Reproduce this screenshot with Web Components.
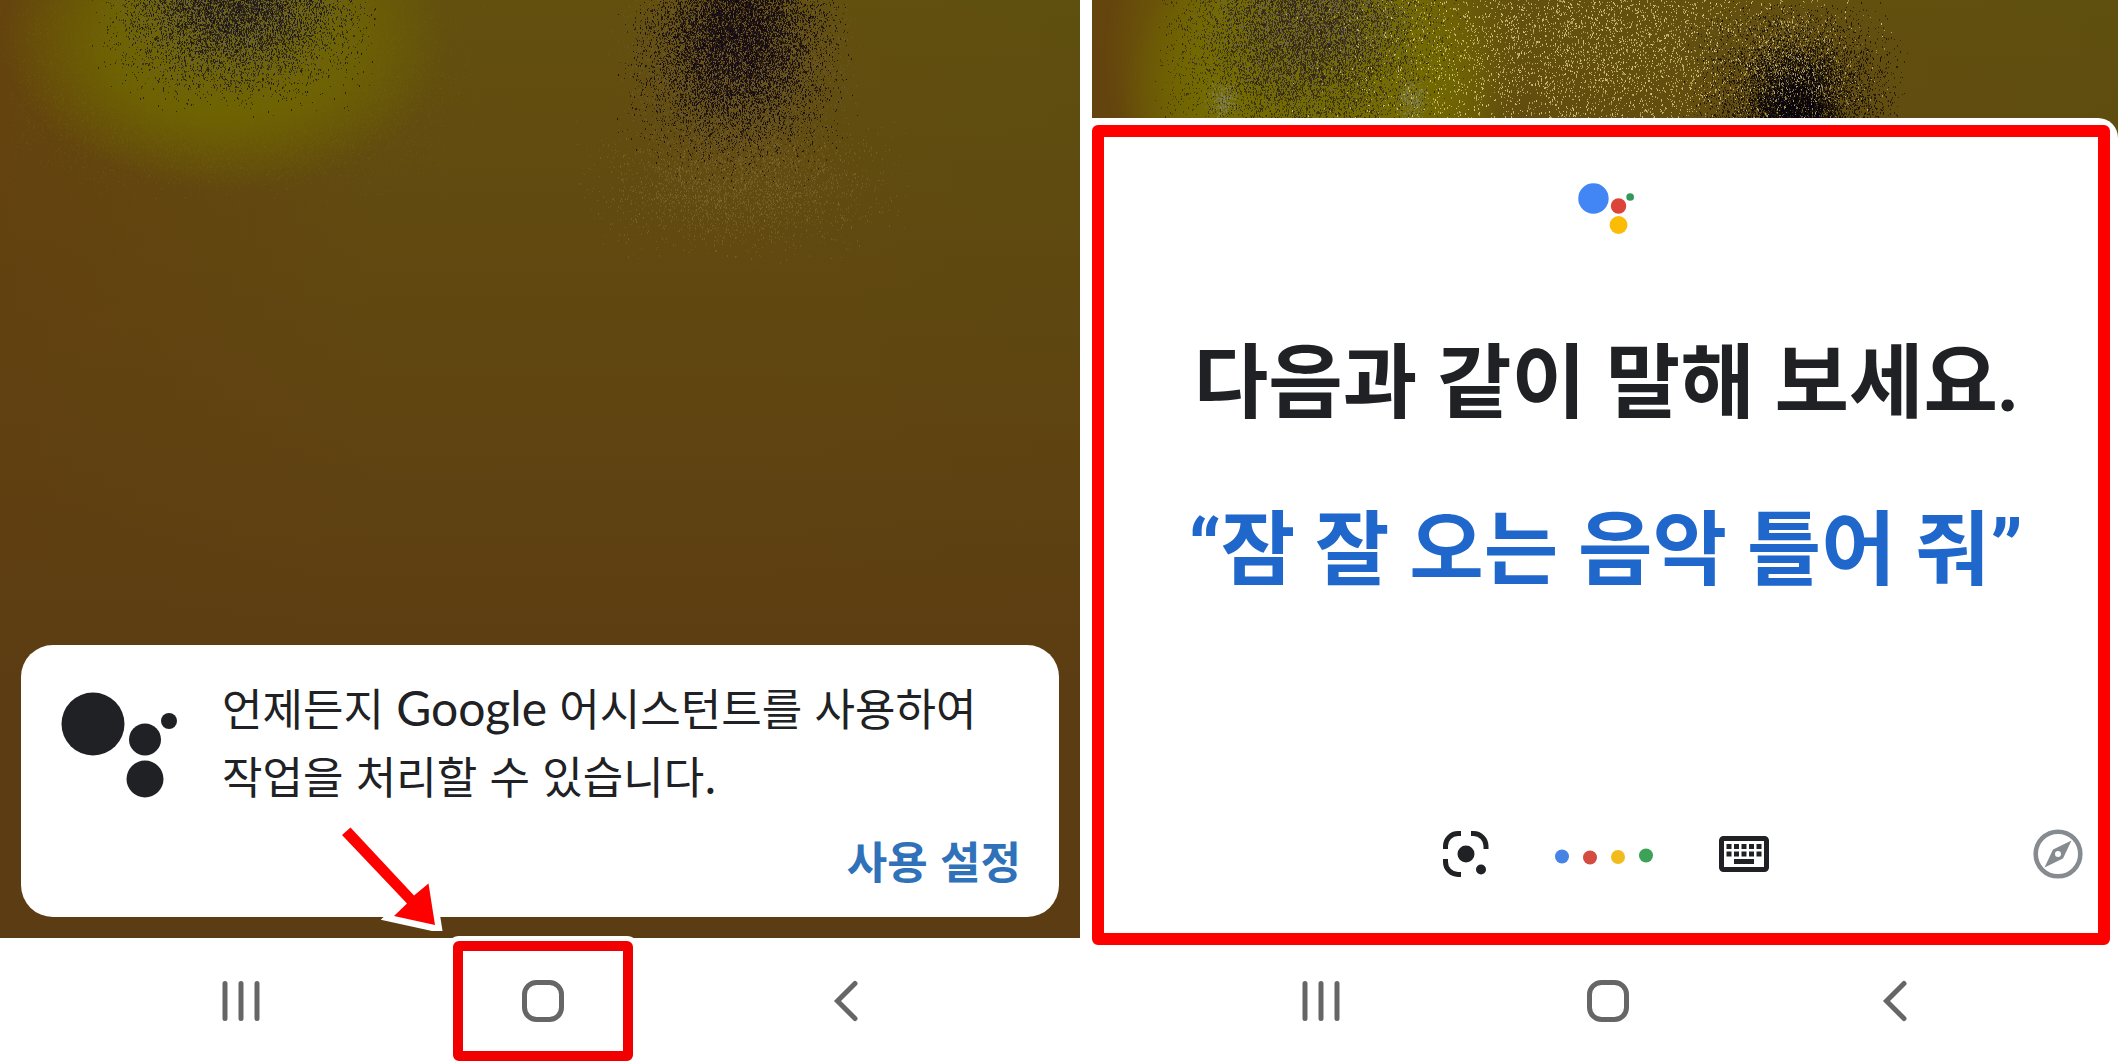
<!DOCTYPE html>
<html lang="ko">
<head>
<meta charset="utf-8">
<title>Google 어시스턴트</title>
<style>
    body {
        margin: 0;
        min-height: 100vh;
        display: grid;
        grid-template-columns: 1080fr 1026fr;
        column-gap: 12px;
        background: #fff;
        color: #202124;
        font-family: "Noto Sans CJK KR", sans-serif;
        overflow-x: hidden;
    }
</style>
</head>
<body>

<phone-screen>
    <speckled-wallpaper slot="wallpaper" scene="home"></speckled-wallpaper>
    <assistant-card>
        언제든지 <span lang="en">Google</span> 어시스턴트를 사용하여<br>작업을 처리할 수 있습니다.
        <span slot="action">사용 설정</span>
    </assistant-card>
    <nav-bar slot="nav" highlight></nav-bar>
</phone-screen>

<phone-screen>
    <speckled-wallpaper slot="wallpaper" scene="assistant"></speckled-wallpaper>
    <assistant-sheet>
        <span slot="title">다음과 같이 말해 보세요.</span>
        <span slot="open-quote">“</span>
        <span slot="hint">잠 잘 오는 음악 틀어 줘</span>
        <span slot="close-quote">”</span>
    </assistant-sheet>
    <nav-bar slot="nav"></nav-bar>
</phone-screen>

<script>
function attach(element, html) {
    const template = document.createElement("template");
    template.innerHTML = html;
    element.attachShadow({ mode: "open" }).appendChild(template.content.cloneNode(true));
}

class PhoneScreen extends HTMLElement {
    constructor() {
        super();
        attach(this, `
            <style>
                :host { display: flex; flex-direction: column; min-width: 0; }
                .screen {
                    flex: 1;
                    position: relative;
                    display: flex;
                    flex-direction: column;
                    justify-content: flex-end;
                }
                ::slotted([slot="wallpaper"]) { position: absolute; inset: 0; }
            </style>
            <div class="screen">
                <slot name="wallpaper"></slot>
                <slot></slot>
            </div>
            <slot name="nav"></slot>
        `);
    }
}

// x, y: centre, rx, ry: spread, n: number of grains
const scenes = {
    home: {
        glows: [
            { x: 225, y: 40, rx: 225, ry: 150, color: "112, 104, 0" }
        ],
        grains: [
            { x: 235, y: 70, rx: 260, ry: 140, n: 30000, color: "112, 98, 6", alpha: .4 },
            { x: 235, y: 0, rx: 160, ry: 120, n: 15000, color: "106, 97, 62", alpha: .75 },
            { x: 235, y: 0, rx: 155, ry: 120, n: 13000, color: "24, 17, 26", alpha: .8 },
            { x: 738, y: 60, rx: 135, ry: 140, n: 12000, color: "110, 94, 62", alpha: .6 },
            { x: 735, y: 58, rx: 125, ry: 135, n: 10000, color: "18, 8, 20", alpha: .9 },
            { x: 738, y: 10, rx: 115, ry: 110, n: 6000, color: "18, 8, 20", alpha: .9 },
            { x: 742, y: 185, rx: 185, ry: 85, n: 3600, color: "140, 116, 58", alpha: .5 }
        ]
    },
    assistant: {
        glows: [
            { x: 220, y: 60, rx: 210, ry: 230, color: "116, 108, 0" },
            { x: 220, y: 100, rx: 190, ry: 170, color: "116, 108, 0" }
        ],
        grains: [
            { x: 220, y: 10, rx: 150, ry: 140, n: 12000, color: "108, 98, 84", alpha: .75 },
            { x: 215, y: 35, rx: 170, ry: 150, n: 14000, color: "44, 32, 22", alpha: .8 },
            { x: 130, y: 100, rx: 22, ry: 28, n: 380, color: "135, 135, 110", alpha: .6 },
            { x: 320, y: 100, rx: 22, ry: 28, n: 380, color: "135, 135, 110", alpha: .6 },
            { x: 500, y: 40, rx: 330, ry: 190, n: 6500, color: "226, 208, 136", alpha: .9 },
            { x: 704, y: 95, rx: 120, ry: 110, n: 9000, color: "16, 10, 14", alpha: .85 },
            { x: 704, y: 122, rx: 55, ry: 85, n: 8000, color: "8, 4, 12", alpha: .9 },
            { x: 704, y: 70, rx: 90, ry: 90, n: 900, color: "205, 185, 130", alpha: .8 }
        ]
    }
};

class SpeckledWallpaper extends HTMLElement {
    constructor() {
        super();
        attach(this, `
            <style>
                :host {
                    display: block;
                    overflow: hidden;
                    background:
                        linear-gradient(180deg, rgba(94, 62, 18, 0) 0, rgba(94, 62, 18, .75) 480px, #5c3d13 680px),
                        linear-gradient(90deg, #65440e 0, #63500f 35%, #63500f 70%, #5f500f 100%);
                }
                canvas { display: block; }
            </style>
            <canvas></canvas>
        `);
    }

    connectedCallback() {
        const canvas = this.shadowRoot.querySelector("canvas");
        const scene = scenes[this.getAttribute("scene")];
        canvas.width = 1080;
        canvas.height = this.getAttribute("scene") === "home" ? 300 : 118;
        const ctx = canvas.getContext("2d");

        scene.glows.forEach((g) => {
            ctx.save();
            ctx.translate(g.x, g.y);
            ctx.scale(g.rx, g.ry);
            const fill = ctx.createRadialGradient(0, 0, 0, 0, 0, 1);
            fill.addColorStop(0, `rgba(${g.color}, 1)`);
            fill.addColorStop(.5, `rgba(${g.color}, .85)`);
            fill.addColorStop(1, `rgba(${g.color}, 0)`);
            ctx.fillStyle = fill;
            ctx.fillRect(-1, -1, 2, 2);
            ctx.restore();
        });

        // seeded, so that the grain is the same on each load
        let seed = 7;
        const random = () => {
            seed = (seed * 1664525 + 1013904223) % 4294967296;
            return seed / 4294967296;
        };
        // -1 to 1, thicker towards 0
        const spread = () => (random() + random() + random()) / 1.5 - 1;

        scene.grains.forEach((g) => {
            for (let i = 0; i < g.n; i++) {
                const x = g.x + spread() * g.rx;
                const y = g.y + spread() * g.ry;
                ctx.fillStyle = `rgba(${g.color}, ${g.alpha * (.5 + random() * .5)})`;
                ctx.fillRect(Math.round(x), Math.round(y), 1, random() > .6 ? 2 : 1);
            }
        });
    }
}

class AssistantLogo extends HTMLElement {
    constructor() {
        super();
        attach(this, `
            <style>
                :host { display: block; flex: none; }
                svg { display: block; width: 100%; }
                .blue { fill: var(--logo-blue, #202124); }
                .red { fill: var(--logo-red, #202124); }
                .yellow { fill: var(--logo-yellow, #202124); }
                .green { fill: var(--logo-green, #202124); }
            </style>
            <svg viewBox="0 0 116 106" aria-hidden="true">
                <circle class="blue" cx="32" cy="32" r="31.5"/>
                <circle class="red" cx="84" cy="47.500" r="16"/>
                <circle class="yellow" cx="84" cy="87" r="18.500"/>
                <circle class="green" cx="108" cy="29" r="8"/>
            </svg>
        `);
    }
}

class AssistantCard extends HTMLElement {
    constructor() {
        super();
        attach(this, `
            <style>
                :host {
                    position: relative;
                    display: flex;
                    flex-direction: column;
                    margin: 21px;
                    padding: 28px 38px 23px 40px;
                    border-radius: 32px;
                    background: #fff;
                }
                .message { display: flex; gap: 45px; align-items: flex-start; }
                assistant-logo { width: 116px; margin-top: 19px; }
                p { margin: 0; font-size: 44px; line-height: 68px; }
                ::slotted([lang="en"]) { font-family: Lato, sans-serif; font-size: 48px; line-height: 1; }
                button {
                    align-self: flex-end;
                    margin-top: 17px;
                    padding: 0;
                    border: 0;
                    background: none;
                    color: #2f72b9;
                    font: bold 44px/68px "Noto Sans CJK KR", sans-serif;
                    cursor: pointer;
                }
            </style>
            <div class="message">
                <assistant-logo></assistant-logo>
                <p><slot></slot></p>
            </div>
            <button type="button"><slot name="action"></slot></button>
        `);
    }
}

class AssistantSheet extends HTMLElement {
    constructor() {
        super();
        attach(this, `
            <style>
                :host {
                    position: relative;
                    flex: 1;
                    display: flex;
                    margin-top: 118px;
                    border-radius: 0 20px 0 0;
                    background: #fff;
                }
                .frame {
                    flex: 1;
                    display: flex;
                    flex-direction: column;
                    align-items: center;
                    margin: 7px 8px -7px 0;
                    padding: 46px 15px 54px 24px;
                    border: 12px solid #fe0000;
                    border-radius: 6px;
                }
                assistant-logo {
                    width: 56px;
                    margin-bottom: 96px;
                    --logo-blue: #4285f4;
                    --logo-red: #db4437;
                    --logo-yellow: #fbbc05;
                    --logo-green: #34985a;
                }
                h1, p {
                    margin: 0 0 67px;
                    font-family: Lato, "Noto Sans CJK KR", sans-serif;
                    font-size: 81px;
                    font-weight: bold;
                    line-height: 100px;
                    white-space: nowrap;
                }
                p { color: #1f67cb; }
                ::slotted([slot$="quote"]) { font-family: Roboto, sans-serif; line-height: 1; }
                .tools {
                    align-self: stretch;
                    display: grid;
                    grid-template-columns: 1fr auto 1fr;
                    align-items: center;
                    margin-top: auto;
                }
                .main { grid-column: 2; display: flex; align-items: center; gap: 66px; }
                button { padding: 0; border: 0; background: none; color: inherit; cursor: pointer; }
                svg { display: block; }
                .explore { justify-self: end; color: #868b90; }
            </style>
            <div class="frame">
                <assistant-logo></assistant-logo>
                <h1><slot name="title"></slot></h1>
                <p><slot name="open-quote"></slot><slot name="hint"></slot><slot name="close-quote"></slot></p>
                <div class="tools">
                    <div class="main">
                        <button type="button" aria-label="Lens">
                            <svg width="46" height="46" viewBox="0 0 46 46" fill="none" stroke="currentColor" stroke-width="5">
                                <path d="M18 2.500H15A12.500 12.500 0 0 0 2.500 15V18M28 2.500H30.500A12.500 12.500 0 0 1 43 15V18M2.500 28V31A12.500 12.500 0 0 0 15 43.500H18"/>
                                <circle cx="23" cy="23" r="8.500" fill="currentColor" stroke="none"/>
                                <circle cx="38" cy="38.500" r="5" fill="currentColor" stroke="none"/>
                            </svg>
                        </button>
                        <button type="button" aria-label="마이크">
                            <svg width="98" height="24" viewBox="0 0 98 24">
                                <circle cx="7" cy="14.500" r="7" fill="#4583e4"/>
                                <circle cx="35" cy="15.500" r="7" fill="#d44b3f"/>
                                <circle cx="63" cy="15" r="7" fill="#f2bb1c"/>
                                <circle cx="91" cy="13.500" r="7" fill="#3ba257"/>
                            </svg>
                        </button>
                        <button type="button" aria-label="키보드">
                            <svg width="50" height="36" viewBox="0 0 50 36" fill="currentColor">
                                <rect x="2.500" y="2.500" width="45" height="31" rx="2" fill="none" stroke="currentColor" stroke-width="5"/>
                                <path d="M7.500 8h5v5h-5zM15 8h5v5h-5zM22.500 8h5v5h-5zM30 8h5v5h-5zM37.500 8h5v5h-5zM7.500 15.500h5v5h-5zM15 15.500h5v5h-5zM22.500 15.500h5v5h-5zM30 15.500h5v5h-5zM37.500 15.500h5v5h-5zM15 23h20v5H15z"/>
                            </svg>
                        </button>
                    </div>
                    <button class="explore" type="button" aria-label="탐색">
                        <svg width="50" height="50" viewBox="0 0 50 50">
                            <circle cx="25" cy="25" r="22.300" fill="none" stroke="currentColor" stroke-width="4.600"/>
                            <path fill="currentColor" fill-rule="evenodd" d="M38.500 11.500L30 29.500L11.500 38.500L20 20.500ZM25 22a3 3 0 1 0 0 6a3 3 0 1 0 0-6Z"/>
                        </svg>
                    </button>
                </div>
            </div>
        `);
    }
}

class NavBar extends HTMLElement {
    constructor() {
        super();
        attach(this, `
            <style>
                :host {
                    display: grid;
                    grid-template-columns: repeat(3, 1fr);
                    align-items: center;
                    justify-items: center;
                    height: 126px;
                    padding: 0 7.7% 0 8.3%;
                    box-sizing: border-box;
                }
                button {
                    display: grid;
                    place-items: center;
                    width: 180px;
                    height: 120px;
                    padding: 0;
                    border: 0;
                    background: none;
                    color: #666;
                    box-sizing: border-box;
                    cursor: pointer;
                }
                svg { display: block; fill: none; stroke: currentColor; stroke-width: 5; stroke-linecap: round; }
                .home { position: relative; }
                .arrow { display: none; }
                :host([highlight]) .home {
                    border: 10px solid #f00000;
                    border-radius: 6px;
                    background: #fff;
                    box-shadow: 0 0 0 5px #fff;
                }
                /* points at the home button from the card above */
                :host([highlight]) .arrow {
                    display: block;
                    position: absolute;
                    right: 180px;
                    bottom: 120px;
                    stroke-width: 13;
                    stroke-linecap: butt;
                }
            </style>
            <button type="button" aria-label="최근 앱">
                <svg width="42" height="42" viewBox="0 0 42 42"><path d="M5 3.500V38.500M21 3.500V38.500M37 3.500V38.500"/></svg>
            </button>
            <button class="home" type="button" aria-label="홈">
                <svg width="42" height="42" viewBox="0 0 42 42"><rect x="2.500" y="2.500" width="37" height="37" rx="12"/></svg>
                <svg class="arrow" width="120" height="120" viewBox="0 0 120 120" aria-hidden="true">
                    <path fill="#fe0000" stroke="#fff" paint-order="stroke" d="M19 24L27.500 16.500L91 84.500L105.500 72.500L112 114L71 105L84 92.500Z"/>
                </svg>
            </button>
            <button type="button" aria-label="뒤로">
                <svg width="42" height="42" viewBox="0 0 42 42"><path d="M30 3.500L12.500 21L30 38.500"/></svg>
            </button>
        `);
    }
}

customElements.define("assistant-logo", AssistantLogo);
customElements.define("speckled-wallpaper", SpeckledWallpaper);
customElements.define("assistant-card", AssistantCard);
customElements.define("assistant-sheet", AssistantSheet);
customElements.define("nav-bar", NavBar);
customElements.define("phone-screen", PhoneScreen);
</script>
</body>
</html>
